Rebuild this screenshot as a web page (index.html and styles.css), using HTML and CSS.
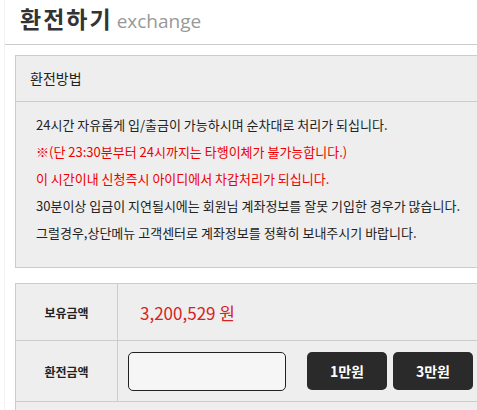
FILE: index.html
```html
<!DOCTYPE html>
<html>

	<head>
		<title>환전하기</title>
		<meta http-equiv="Content-Type" content="text/html; charset=utf-8" />
		<link rel="stylesheet" href="styles.css">
	</head>

	<body>
		<div class="wrap">
			<div class="title">
				<h2>환전하기</h2>
				<span class="sub">exchange</span>
			</div>

			<div class="guide">
				<div class="guideHead">환전방법</div>
				<div class="guideBody">
					<p>24시간 자유롭게 입/출금이 가능하시며 순차대로 처리가 되십니다.</p>
					<p class="red">※(단 23:30분부터 24시까지는 타행이체가 불가능합니다.)</p>
					<p class="red">이 시간이내 신청즉시 아이디에서 차감처리가 되십니다.</p>
					<p>30분이상 입금이 지연될시에는 회원님 계좌정보를 잘못 기입한 경우가 많습니다.</p>
					<p>그럴경우,상단메뉴 고객센터로 계좌정보를 정확히 보내주시기 바랍니다.</p>
				</div>
			</div>

			<table class="form">
				<tr class="row1">
					<th>보유금액</th>
					<td><span class="money">3,200,529 원</span></td>
				</tr>
				<tr class="row2">
					<th>환전금액</th>
					<td>
						<div class="inputRow">
							<input id="amount" type="text" class="amount" />
							<input type="button" value="1만원" class="btn first" />
							<input type="button" value="3만원" class="btn" />
						</div>
					</td>
				</tr>
				<tr class="row3">
					<td colspan="2"></td>
				</tr>
			</table>
		</div>
	</body>

</html>
```

FILE: styles.css
```css
html {overflow: hidden;}
body {padding: 0;margin: 0;background: #fff;font-family: "Noto Sans CJK KR", "Noto Sans", sans-serif;color: #222;}
.wrap {margin-left: 4px;width: 520px;min-height: 410px;border-left: 1px solid #f2f2f2;}

.title {display: flex;align-items: baseline;height: 45px;padding-left: 15px;border-bottom: 1px solid #ccc;box-sizing: border-box;padding-top: 3px;}
.title h2 {margin: 0;font-size: 23px;line-height: 30px;font-weight: bold;color: #333;letter-spacing: 2px;}
.title .sub {margin-left: 4px;font-family: "Open Sans", "Noto Sans", sans-serif;font-size: 19px;color: #999;}

.guide {margin: 10px 0 0 10px;background: #eee;border: 1px solid #ccc;}
.guideHead {height: 45px;line-height: 45px;padding-left: 14px;font-size: 14px;color: #222;border-bottom: 1px solid #ccc;}
.guideBody {padding: 9px 0 21px 20px;font-size: 13px;line-height: 27px;color: #222;}
.guideBody p {margin: 0;}
.guideBody .red {color: #e00;}

.form {margin: 15px 0 0 10px;width: 510px;border-collapse: collapse;background: #eee;}
.form th, .form td {border: 1px solid #ccc;padding: 0;}
.form th {width: 101px;font-size: 12px;font-weight: bold;color: #222;text-align: center;}
.form td {padding-left: 10px;}
.row1 {height: 57px;}
.row2 {height: 61px;}
.row3 {height: 20px;}
.money {font-size: 17px;color: #d52323;padding-left: 12px;}
.inputRow {display: flex;align-items: center;}
.amount {width: 158px;height: 39px;box-sizing: border-box;border: 1px solid #222;border-radius: 5px;background: #f6f6f6;}
.btn {width: 80px;height: 38px;margin-left: 6px;border: 0;border-radius: 5px;background: #2a2a2a;color: #fff;font-family: "Noto Sans CJK KR", sans-serif;font-size: 14px;font-weight: bold;}
.btn.first {margin-left: 21px;}
```
